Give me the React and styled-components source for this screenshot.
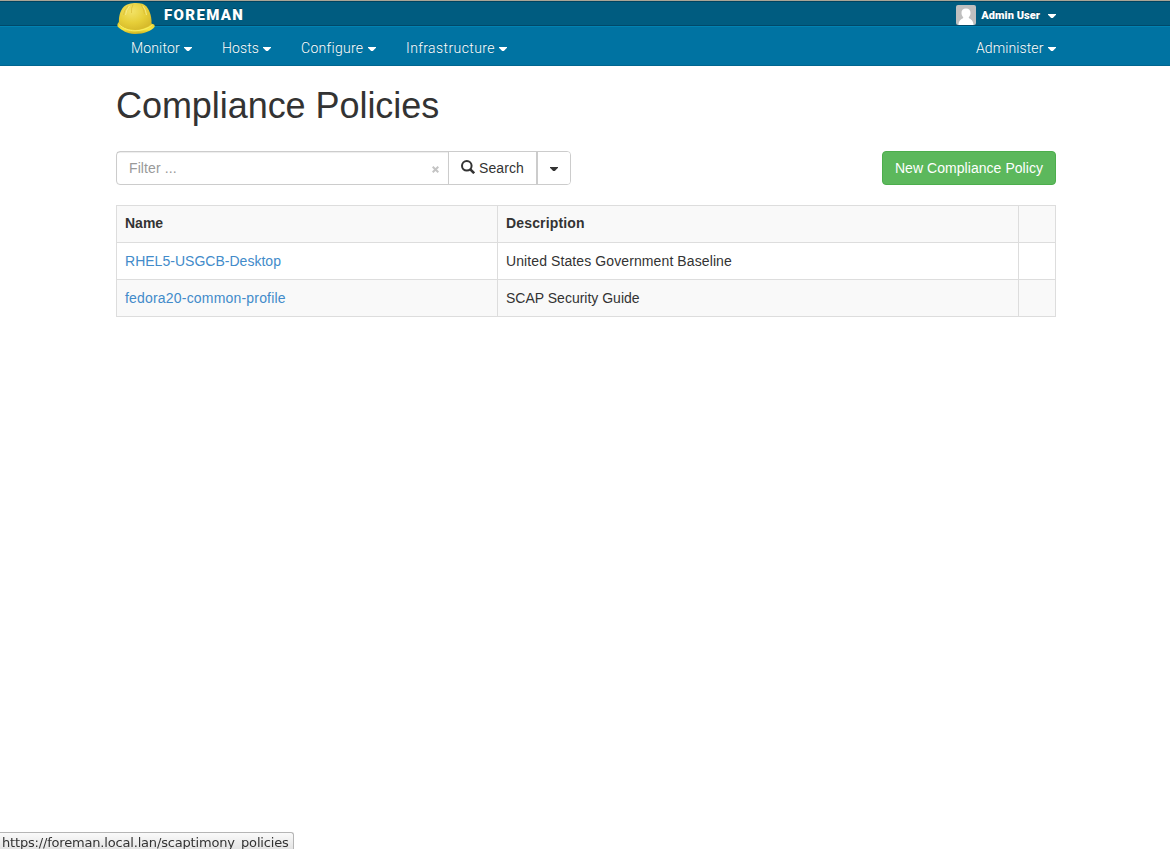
import React from 'react';
import styled, { createGlobalStyle } from 'styled-components';

const GlobalStyle = createGlobalStyle`
  * { box-sizing: border-box; }
  html, body, #root { height: 100%; }
  body {
    margin: 0;
    overflow: hidden;
    background: #fff;
    color: #333;
    font: 14px/20px "Liberation Sans", Arial, sans-serif;
  }
`;

const Page = styled.div`
  height: 100%;
  display: flex;
  flex-direction: column;
`;

const TopBar = styled.header`
  height: 26px;
  border-top: 1px solid #a9a596;
  border-bottom: 1px solid #00496a;
  background: #005c80;
  box-shadow: inset 0 1px 0 #004460;
`;

const Container = styled.div`
  width: 940px;
  height: 100%;
  margin-left: 116px;
  display: flex;
  justify-content: space-between;
`;

const Brand = styled.a`
  display: flex;
  align-items: flex-start;
  color: #fff;
  font: 900 15px/29px Roboto, sans-serif;
  letter-spacing: 1.35px;
  text-shadow: 0 -1px 0 rgba(0, 0, 0, 0.3);
`;

const HelmetIcon = styled.svg`
  width: 40px;
  height: 34px;
  margin-right: 8px;
  position: relative;
  z-index: 1;
`;

const UserMenu = styled.a`
  display: flex;
  align-items: flex-start;
  color: #fff;
  font: 900 11px/29px Roboto, sans-serif;
  letter-spacing: 0.05px;
  text-shadow: 0 -1px 0 rgba(0, 0, 0, 0.3);
`;

const Avatar = styled.svg`
  width: 20px;
  height: 20px;
  margin: 4px 5px 0 0;
`;

const Caret = styled.span`
  width: 8px;
  height: 4px;
  margin: ${({ $margin }) => $margin || '0'};
  background: currentColor;
  clip-path: polygon(0 0, 100% 0, 100% 20%, 60% 100%, 40% 100%, 0 20%);
`;

const NavBar = styled.nav`
  height: 40px;
  border-top: 1px solid #0082b2;
  border-bottom: 1px solid #006690;
  background: #0073a2;
`;

const NavGroup = styled.div`
  display: flex;
  gap: 30px;
  padding-left: 15px;
`;

const NavItem = styled.a`
  display: flex;
  align-items: flex-start;
  color: #fff;
  font: 300 14px/42px Roboto, sans-serif;
  letter-spacing: ${({ $spacing }) => $spacing}px;
  text-shadow: 0 -1px 0 rgba(0, 0, 0, 0.2);
`;

const NavLabel = styled.span`
  width: ${({ $width }) => $width}px;
  white-space: nowrap;
`;

const Main = styled.main`
  width: 940px;
  margin-left: 116px;
`;

const Title = styled.h1`
  margin: 20px 0 25px;
  font-size: 36px;
  font-weight: 400;
  line-height: 40px;
  letter-spacing: -0.05px;
`;

const Toolbar = styled.div`
  height: 34px;
  margin-bottom: 20px;
  display: flex;
  justify-content: space-between;
`;

const SearchGroup = styled.div`
  width: 455px;
  display: flex;
  border: 1px solid #ccc;
  border-radius: 4px;
`;

const FilterField = styled.div`
  flex: 1;
  padding: 0 9px 0 12px;
  display: flex;
  align-items: center;
  justify-content: space-between;
  color: #999;
  letter-spacing: 0.1px;
  box-shadow: inset 0 1px 1px rgba(0, 0, 0, 0.075);
`;

const ClearIcon = styled.svg`
  width: 7px;
  height: 7px;
  margin-top: 3px;
`;

const SearchButton = styled.button`
  width: 88px;
  padding: 0 0 0 12px;
  display: flex;
  align-items: center;
  gap: 4px;
  border: 0;
  border-left: 1px solid #ccc;
  background: #fff;
  color: #333;
  font: inherit;
  letter-spacing: 0.1px;
`;

const SearchIcon = styled.svg`
  width: 14px;
  height: 14px;
  margin-top: -2px;
`;

const ToggleButton = styled.button`
  width: 34px;
  padding: 2px 0 0;
  display: flex;
  align-items: center;
  justify-content: center;
  border: 0;
  border-left: 2px solid #ccc;
  border-radius: 0 3px 3px 0;
  background: #fff;
  color: #333;
`;

const PrimaryButton = styled.button`
  width: 174px;
  padding: 0;
  border: 1px solid #4cae4c;
  border-radius: 4px;
  background: #5cb85c;
  color: #fff;
  font: inherit;
  letter-spacing: 0.05px;
`;

const PolicyTable = styled.table`
  width: 940px;
  table-layout: fixed;
  border-collapse: collapse;
`;

const Row = styled.tr`
  height: 37px;
  background: ${({ $shaded }) => ($shaded ? '#f9f9f9' : '#fff')};
`;

const HeadCell = styled.th`
  width: ${({ $width }) => $width}px;
  padding: 0 8px 2px;
  border: 1px solid #ddd;
  text-align: left;
  letter-spacing: ${({ $spacing }) => $spacing || 0}px;
`;

const Cell = styled.td`
  padding: 0 8px;
  border: 1px solid #ddd;
  letter-spacing: ${({ $spacing }) => $spacing || 0}px;
`;

const PolicyLink = styled.a`
  color: #428bca;
`;

const StatusBar = styled.div`
  position: fixed;
  left: 0;
  bottom: 0;
  width: 294px;
  height: 17px;
  padding-left: 2px;
  overflow: hidden;
  border: 1px solid #b5b5b5;
  border-left: 0;
  border-bottom: 0;
  border-top-right-radius: 3px;
  background: linear-gradient(#fafafa, #e4e4e4);
  color: #333;
  font: 13px/19px "DejaVu Sans", sans-serif;
  letter-spacing: -0.18px;
  white-space: nowrap;
`;

const menus = [
  { label: 'Monitor', width: 53, spacing: 0.15 },
  { label: 'Hosts', width: 41, spacing: 0.1 },
  { label: 'Configure', width: 67, spacing: 0.3 },
  { label: 'Infrastructure', width: 93, spacing: 0.4 },
];

const policies = [
  { name: 'RHEL5-USGCB-Desktop', nameSpacing: 0.02, description: 'United States Government Baseline', spacing: 0.1 },
  { name: 'fedora20-common-profile', nameSpacing: 0.19, description: 'SCAP Security Guide', spacing: 0 },
];

function Helmet() {
  return (
    <HelmetIcon viewBox="0 0 40 34">
      <defs>
        <radialGradient id="shell" cx="0.4" cy="0.3" r="0.8">
          <stop offset="0" stopColor="#f3e368" />
          <stop offset="0.55" stopColor="#e6ce38" />
          <stop offset="1" stopColor="#d2b428" />
        </radialGradient>
        <linearGradient id="brim" x1="0" x2="0" y1="0" y2="1">
          <stop offset="0" stopColor="#e0c42c" />
          <stop offset="0.6" stopColor="#f6e742" />
          <stop offset="1" stopColor="#c9ae20" />
        </linearGradient>
      </defs>
      <path d="M3 21 C1 22.5 1 25 2 26 C6 29.5 11 32.5 18 33 C27 33.5 36 29.5 38.5 26 C39.3 24 37.5 22.8 35 22.5 Z" fill="url(#brim)" />
      <path d="M3 23 C2.5 17 3.5 10.5 7.5 6 C10 3.2 15 2.2 20 2 C25 2 28.5 3 30.5 5.5 C34.5 10.5 35.8 17 35.5 23 C31 27 25 29 19 29 C12 28.8 6 26.5 3 23 Z" fill="url(#shell)" />
      <path d="M3 23.5 C8 28 13 29.8 19 29.8 C26 29.7 32 27.5 36.5 24" fill="none" stroke="#f8ec65" strokeWidth="1" />
      <path d="M12 5 Q8 9 7.5 14 M17 3.5 Q15 7 15.5 12 M25 3.5 Q28 8 28.5 13" fill="none" stroke="#d8ba35" strokeWidth="0.7" />
      <path d="M13.5 5 Q10 9 9.5 14 M27 5 Q30 9 30.5 14" fill="none" stroke="#f8ee94" strokeWidth="0.8" />
    </HelmetIcon>
  );
}

export default function App() {
  return (
    <>
      <GlobalStyle />
      <Page>
        <TopBar>
          <Container>
            <Brand><Helmet />FOREMAN</Brand>
            <UserMenu>
              <Avatar viewBox="0 0 20 20">
                <rect width="20" height="20" rx="2" fill="#bfbfbf" />
                <path d="M10 3.5 C13 3.5 14.7 5.5 14.5 8.2 C14.4 10 13.7 11.3 12.7 12.5 C12.5 14 17.5 13.7 17.5 20 H2.5 C2.5 13.7 7.5 14 7.3 12.5 C6.3 11.3 5.6 10 5.5 8.2 C5.3 5.5 7 3.5 10 3.5 Z" fill="#fff" />
              </Avatar>
              Admin User
              <Caret $margin="13px 0 0 8px" />
            </UserMenu>
          </Container>
        </TopBar>
        <NavBar>
          <Container>
            <NavGroup>
              {menus.map((menu) => (
                <NavItem key={menu.label} $spacing={menu.spacing}>
                  <NavLabel $width={menu.width}>{menu.label}</NavLabel>
                  <Caret $margin="20px 0 0" />
                </NavItem>
              ))}
            </NavGroup>
            <NavItem $spacing={0.1}>
              <NavLabel $width={72}>Administer</NavLabel>
              <Caret $margin="20px 0 0" />
            </NavItem>
          </Container>
        </NavBar>
        <Main>
          <Title>Compliance Policies</Title>
          <Toolbar>
            <SearchGroup>
              <FilterField>
                Filter ...
                <ClearIcon viewBox="0 0 7 7"><path d="M0.7 0.7 L6.3 6.3 M6.3 0.7 L0.7 6.3" stroke="#c4c4c4" strokeWidth="2" /></ClearIcon>
              </FilterField>
              <SearchButton>
                <SearchIcon viewBox="0 0 14 14" fill="none" stroke="#333">
                  <circle cx="5.8" cy="5.8" r="4.8" strokeWidth="2" />
                  <path d="M9.3 9.3 L13.2 13.2" strokeWidth="2.6" />
                </SearchIcon>
                Search
              </SearchButton>
              <ToggleButton><Caret /></ToggleButton>
            </SearchGroup>
            <PrimaryButton>New Compliance Policy</PrimaryButton>
          </Toolbar>
          <PolicyTable>
            <thead>
              <Row $shaded>
                <HeadCell $width={381}>Name</HeadCell>
                <HeadCell $width={521} $spacing={0.15}>Description</HeadCell>
                <HeadCell $width={37} />
              </Row>
            </thead>
            <tbody>
              {policies.map((policy, index) => (
                <Row key={policy.name} $shaded={index % 2 === 1}>
                  <Cell $spacing={policy.nameSpacing}><PolicyLink>{policy.name}</PolicyLink></Cell>
                  <Cell $spacing={policy.spacing}>{policy.description}</Cell>
                  <Cell />
                </Row>
              ))}
            </tbody>
          </PolicyTable>
        </Main>
        <StatusBar>https://foreman.local.lan/scaptimony_policies</StatusBar>
      </Page>
    </>
  );
}
